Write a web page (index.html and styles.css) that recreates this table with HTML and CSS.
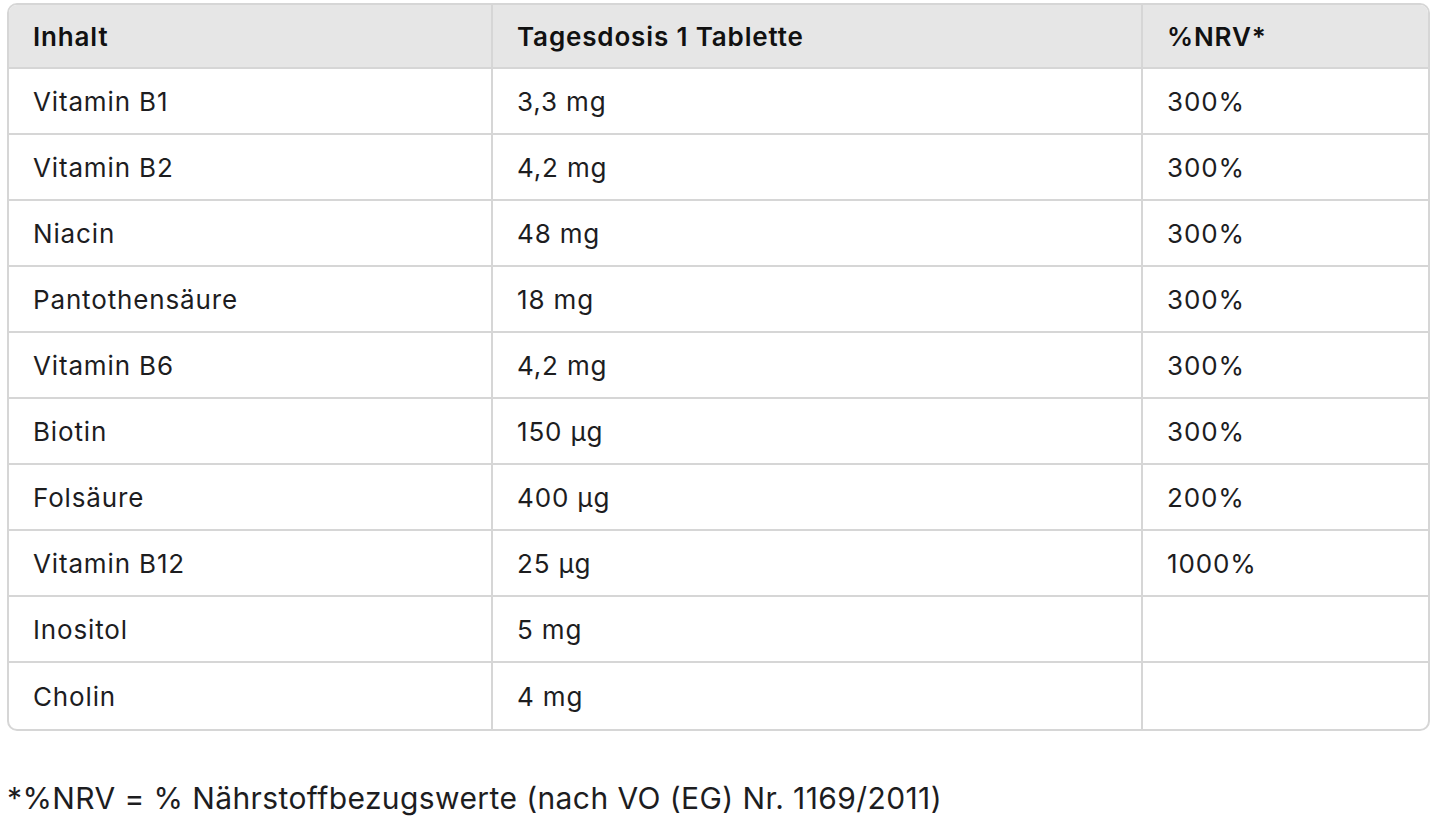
FILE: index.html
```html
<!DOCTYPE html>
<html lang="de">
<head>
<meta charset="utf-8">
<link rel="stylesheet" href="styles.css">
</head>
<body>
<div class="page">
  <table class="nutri">
    <colgroup>
      <col class="c1"><col class="c2"><col class="c3">
    </colgroup>
    <thead>
      <tr><th>Inhalt</th><th>Tagesdosis 1 Tablette</th><th>%NRV*</th></tr>
    </thead>
    <tbody>
      <tr><td>Vitamin B1</td><td>3,3 mg</td><td>300%</td></tr>
      <tr><td>Vitamin B2</td><td>4,2 mg</td><td>300%</td></tr>
      <tr><td>Niacin</td><td>48 mg</td><td>300%</td></tr>
      <tr><td>Pantothensäure</td><td>18 mg</td><td>300%</td></tr>
      <tr><td>Vitamin B6</td><td>4,2 mg</td><td>300%</td></tr>
      <tr><td>Biotin</td><td>150 µg</td><td>300%</td></tr>
      <tr><td>Folsäure</td><td>400 µg</td><td>200%</td></tr>
      <tr><td>Vitamin B12</td><td>25 µg</td><td>1000%</td></tr>
      <tr><td>Inositol</td><td>5 mg</td><td></td></tr>
      <tr><td>Cholin</td><td>4 mg</td><td></td></tr>
    </tbody>
  </table>
  <p class="note">*%NRV = % Nährstoffbezugswerte (nach VO (EG) Nr. 1169/2011)</p>
</div>
</body>
</html>
```
FILE: styles.css
```css
html, body {
  margin: 0;
  padding: 0;
  background: #ffffff;
}
.page {
  padding: 3px 13px 0 7px;
  font-family: Inter, "Noto Sans", sans-serif;
  color: #1d1d1f;
}
.nutri {
  width: 1423px;
  table-layout: fixed;
  border-collapse: separate;
  border-spacing: 0;
  border: 2px solid #d6d6d6;
  border-radius: 10px;
  overflow: hidden;
  font-size: 26px;
  letter-spacing: 0.85px;
}
.c1 { width: 484px; }
.c2 { width: 650px; }
.c3 { width: 285px; }
.nutri th, .nutri td {
  height: 66px;
  padding: 0 24px;
  text-align: left;
  vertical-align: middle;
  border-right: 2px solid #d6d6d6;
  border-bottom: 2px solid #d6d6d6;
  box-sizing: border-box;
}
.nutri th {
  height: 64px;
  background: #e6e6e6;
  font-weight: 600;
  color: #111;
}
.nutri th:last-child, .nutri td:last-child { border-right: none; }
.nutri tbody tr:last-child td { border-bottom: none; }
.note {
  margin: 49px 0 0 0;
  font-family: Inter, "Noto Sans", sans-serif;
  font-size: 30px;
  letter-spacing: 0.4px;
  color: #1d1d1f;
}
```
